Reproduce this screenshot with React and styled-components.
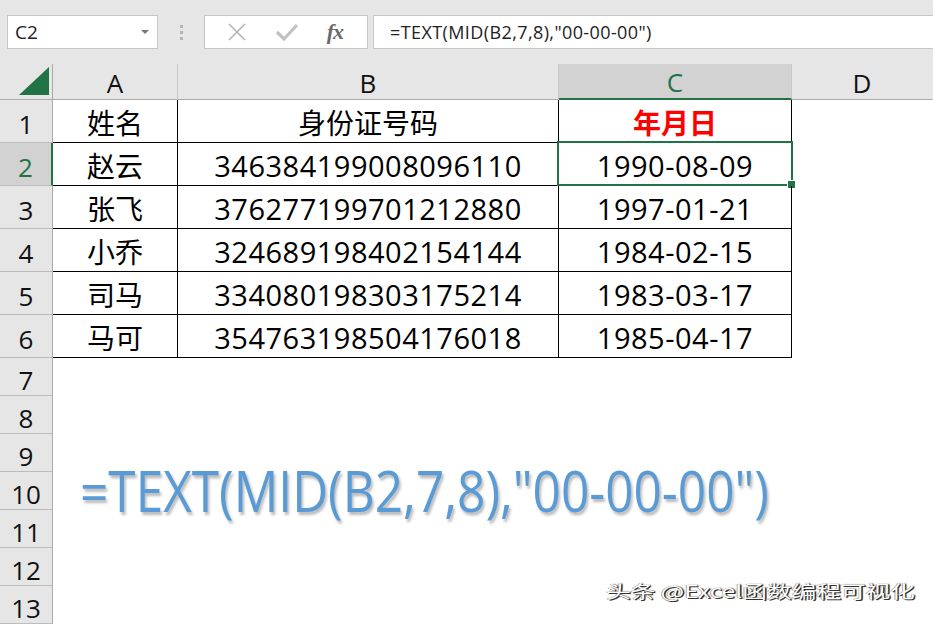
import React from "react";
import styled, { createGlobalStyle } from "styled-components";

const GREEN = "#217346";
const HEAD_BG = "#e6e6e6";
const HEAD_ACTIVE = "#d2d2d2";

const GlobalStyle = createGlobalStyle`
  html, body {
    margin: 0;
    padding: 0;
    background: #ffffff;
    overflow: hidden;
  }
  * {
    box-sizing: border-box;
  }
`;

const Page = styled.div`
  position: relative;
  width: 933px;
  height: 626px;
  overflow: hidden;
  background: #ffffff;
  font-family: "Open Sans", "Noto Sans CJK SC", sans-serif;
`;

const FormulaBar = styled.div`
  height: 64px;
  background: ${HEAD_BG};
  display: flex;
  align-items: center;
  padding-left: 7px;
`;

const Box = styled.div`
  height: 34px;
  background: #ffffff;
  border: 1px solid #c6c6c6;
  display: flex;
  align-items: center;
`;

const NameBox = styled(Box)`
  width: 151px;
  padding: 0 8px 0 7px;
  justify-content: space-between;
  font-size: 19px;
  color: #222;
`;

const Caret = styled.span`
  width: 0;
  height: 0;
  border-left: 4px solid transparent;
  border-right: 4px solid transparent;
  border-top: 4px solid #777;
`;

const Grip = styled.div`
  width: 46px;
  display: flex;
  flex-direction: column;
  align-items: center;
  gap: 3px;
  span {
    width: 3px;
    height: 3px;
    background: #b5b5b5;
  }
`;

const FxBox = styled(Box)`
  width: 164px;
  justify-content: space-around;
  padding: 0 10px 0 8px;
`;

const FxLabel = styled.span`
  font-family: "Liberation Serif", serif;
  font-style: italic;
  font-weight: 700;
  font-size: 22px;
  color: #6a6a6a;
  letter-spacing: -1px;
`;

const InputBox = styled(Box)`
  flex: 1;
  margin-left: 5px;
  border-right: none;
  padding-left: 16px;
  font-size: 18px;
  letter-spacing: 0.4px;
  color: #222;
`;

const Sheet = styled.div`
  display: grid;
  grid-template-columns: 53px 125px 381px 233px 1fr;
  grid-template-rows: 36px repeat(6, 43px) repeat(7, 38px);
`;

const Corner = styled.div`
  background: ${HEAD_BG};
  border-right: 1px solid #ababab;
  border-bottom: 1px solid #ababab;
  display: flex;
  align-items: flex-end;
  justify-content: flex-end;
  padding: 0 3px 4px 0;
`;

const ColHeader = styled.div`
  background: ${(p) => (p.$active ? HEAD_ACTIVE : HEAD_BG)};
  border-right: 1px solid ${(p) => (p.$last ? "transparent" : "#c8c8c8")};
  border-bottom: ${(p) => (p.$active ? `2px solid ${GREEN}` : "1px solid #ababab")};
  color: ${(p) => (p.$active ? GREEN : "#111")};
  display: flex;
  align-items: center;
  justify-content: center;
  font-size: 26px;
  padding-top: 2px;
`;

const RowHeader = styled.div`
  background: ${(p) => (p.$active ? HEAD_ACTIVE : HEAD_BG)};
  border-right: ${(p) => (p.$active ? `2px solid ${GREEN}` : "1px solid #ababab")};
  border-bottom: 1px solid #bcbcbc;
  color: ${(p) => (p.$active ? GREEN : "#111")};
  display: flex;
  align-items: center;
  justify-content: center;
  font-size: 26px;
  padding-top: 6px;
`;

const Cell = styled.div`
  position: relative;
  border-right: ${(p) => (p.$boxed ? "1px solid #000" : "none")};
  border-bottom: ${(p) => (p.$boxed ? "1px solid #000" : "none")};
  display: flex;
  align-items: center;
  justify-content: center;
  font-size: ${(p) => (p.$cjk ? "28px" : "29px")};
  letter-spacing: ${(p) => (p.$cjk ? "0" : "0.5px")};
  font-family: ${(p) =>
    p.$cjk ? `"Noto Sans CJK SC", sans-serif` : `"Open Sans", "Noto Sans CJK SC", sans-serif`};
  font-weight: ${(p) => (p.$strong ? 700 : 400)};
  color: ${(p) => (p.$strong ? "#ff0000" : "#000")};
  padding-top: 2px;
`;

const Selection = styled.div`
  position: absolute;
  top: -2px;
  left: -2px;
  right: -2px;
  bottom: -1px;
  border: 2px solid ${GREEN};
  pointer-events: none;
  &::after {
    content: "";
    position: absolute;
    right: -5px;
    bottom: -5px;
    width: 7px;
    height: 7px;
    background: ${GREEN};
    border: 1px solid #fff;
  }
`;

const BigFormula = styled.div`
  position: absolute;
  left: 80px;
  top: 462px;
  font-family: "Open Sans", sans-serif;
  font-size: 56px;
  line-height: 1;
  color: #5b9bd5;
  white-space: nowrap;
  transform: scaleX(0.885);
  transform-origin: left top;
  text-shadow: 2px 3px 3px rgba(0, 0, 0, 0.28);
`;

const Watermark = styled.div`
  position: absolute;
  left: 606px;
  top: 581px;
  font-family: "Noto Sans CJK SC", sans-serif;
  font-size: 17px;
  line-height: 20px;
  color: #ffffff;
  white-space: nowrap;
  transform: scaleX(1.45);
  transform-origin: left top;
  text-shadow: 1px 1px 0 #333, -0.5px -0.5px 0 #888, 1px 0 1px #444;
`;

const rows = [
  ["姓名", "身份证号码", "年月日"],
  ["赵云", "346384199008096110", "1990-08-09"],
  ["张飞", "376277199701212880", "1997-01-21"],
  ["小乔", "324689198402154144", "1984-02-15"],
  ["司马", "334080198303175214", "1983-03-17"],
  ["马可", "354763198504176018", "1985-04-17"],
];

const cols = ["A", "B", "C", "D"];

export default function App() {
  return (
    <Page>
      <GlobalStyle />
      <FormulaBar>
        <NameBox>
          <span>C2</span>
          <Caret />
        </NameBox>
        <Grip>
          <span />
          <span />
          <span />
        </Grip>
        <FxBox>
          <svg width="20" height="20" viewBox="0 0 20 20">
            <path d="M2 2 L18 18 M18 2 L2 18" stroke="#b3b3b3" strokeWidth="1.6" fill="none" />
          </svg>
          <svg width="24" height="20" viewBox="0 0 24 20">
            <path d="M2 10 L9 17 L22 3" stroke="#c2c2c2" strokeWidth="3.2" fill="none" />
          </svg>
          <FxLabel>fx</FxLabel>
        </FxBox>
        <InputBox>=TEXT(MID(B2,7,8),"00-00-00")</InputBox>
      </FormulaBar>

      <Sheet>
        <Corner>
          <svg width="30" height="28" viewBox="0 0 30 28">
            <polygon points="30,0 30,28 0,28" fill={GREEN} />
          </svg>
        </Corner>
        {cols.map((c, i) => (
          <ColHeader key={c} $active={c === "C"} $last={i === cols.length - 1}>
            {c}
          </ColHeader>
        ))}

        {Array.from({ length: 13 }, (_, r) => {
          const data = rows[r];
          return (
            <React.Fragment key={r}>
              <RowHeader $active={r === 1}>{r + 1}</RowHeader>
              {data ? (
                <>
                  <Cell $boxed $cjk>{data[0]}</Cell>
                  <Cell $boxed $cjk={r === 0}>{data[1]}</Cell>
                  <Cell $boxed $cjk={r === 0} $strong={r === 0}>
                    {data[2]}
                    {r === 1 && <Selection />}
                  </Cell>
                  <Cell />
                </>
              ) : (
                <>
                  <Cell />
                  <Cell />
                  <Cell />
                  <Cell />
                </>
              )}
            </React.Fragment>
          );
        })}
      </Sheet>

      <BigFormula>=TEXT(MID(B2,7,8),"00-00-00")</BigFormula>
      <Watermark>头条 @Excel函数编程可视化</Watermark>
    </Page>
  );
}
